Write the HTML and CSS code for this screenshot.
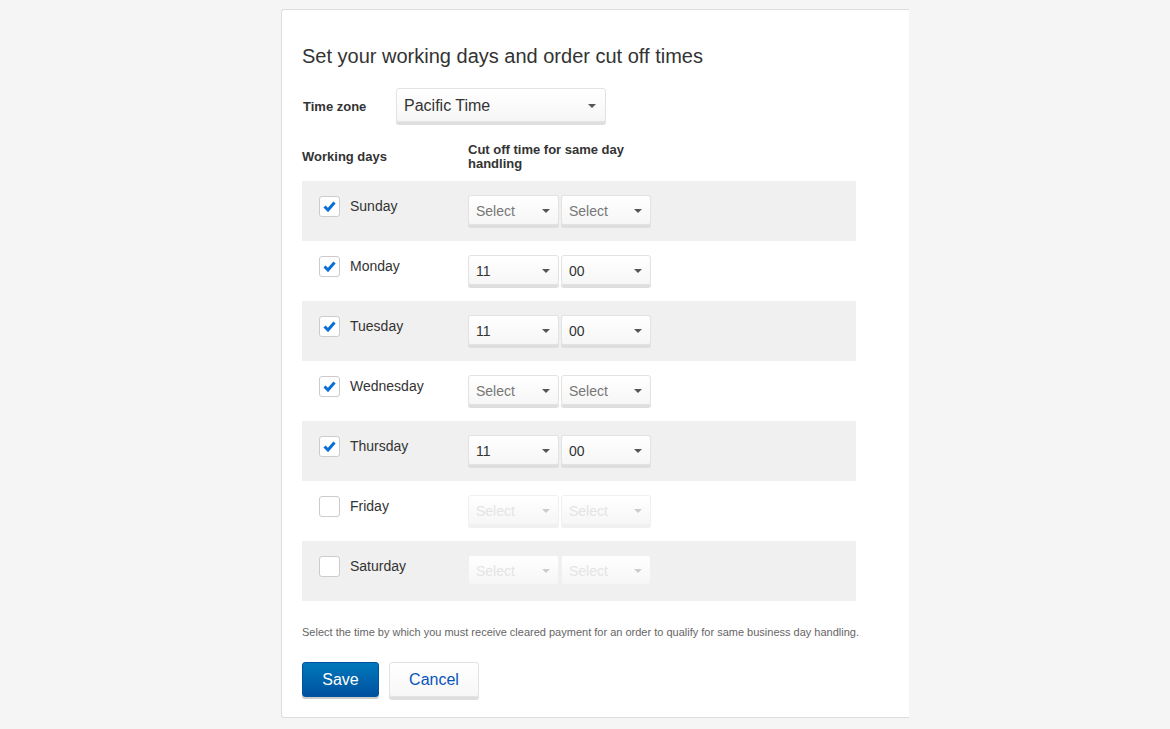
FILE: index.html
```html
<!DOCTYPE html>
<html lang="en">
  <head>
    <meta charset="UTF-8" />
    <title>Working days</title>
    <link rel="stylesheet" href="styles.css">
  </head>
  <body>
    <div class="card">
      <h1>Set your working days and order cut off times</h1>

      <!-- time zone -->
      <div class="tz-row">
        <label class="tz-label">Time zone</label>
        <div class="select select-tz">
          <span>Pacific Time</span>
          <svg class="caret" width="8" height="4" viewBox="0 0 8 4"><path d="M0 0h8L4 4z" /></svg>
        </div>
      </div>

      <div class="head-row">
        <div class="head-days">Working days</div>
        <div class="head-cut">Cut off time for same day handling</div>
      </div>

      <!-- days -->
      <div class="days">
        <div class="day-row shaded">
          <div class="day"><span class="check on"><svg width="13" height="11" viewBox="0 0 13 11"><path d="M1.5 5.5l3.5 3.5l6.5-7.5" /></svg></span>Sunday</div>
          <div class="times">
            <div class="select hour placeholder"><span>Select</span><svg class="caret" width="8" height="4" viewBox="0 0 8 4"><path d="M0 0h8L4 4z" /></svg></div>
            <div class="select minute placeholder"><span>Select</span><svg class="caret" width="8" height="4" viewBox="0 0 8 4"><path d="M0 0h8L4 4z" /></svg></div>
          </div>
        </div>
        <div class="day-row">
          <div class="day"><span class="check on"><svg width="13" height="11" viewBox="0 0 13 11"><path d="M1.5 5.5l3.5 3.5l6.5-7.5" /></svg></span>Monday</div>
          <div class="times">
            <div class="select hour"><span>11</span><svg class="caret" width="8" height="4" viewBox="0 0 8 4"><path d="M0 0h8L4 4z" /></svg></div>
            <div class="select minute"><span>00</span><svg class="caret" width="8" height="4" viewBox="0 0 8 4"><path d="M0 0h8L4 4z" /></svg></div>
          </div>
        </div>
        <div class="day-row shaded">
          <div class="day"><span class="check on"><svg width="13" height="11" viewBox="0 0 13 11"><path d="M1.5 5.5l3.5 3.5l6.5-7.5" /></svg></span>Tuesday</div>
          <div class="times">
            <div class="select hour"><span>11</span><svg class="caret" width="8" height="4" viewBox="0 0 8 4"><path d="M0 0h8L4 4z" /></svg></div>
            <div class="select minute"><span>00</span><svg class="caret" width="8" height="4" viewBox="0 0 8 4"><path d="M0 0h8L4 4z" /></svg></div>
          </div>
        </div>
        <div class="day-row">
          <div class="day"><span class="check on"><svg width="13" height="11" viewBox="0 0 13 11"><path d="M1.5 5.5l3.5 3.5l6.5-7.5" /></svg></span>Wednesday</div>
          <div class="times">
            <div class="select hour placeholder"><span>Select</span><svg class="caret" width="8" height="4" viewBox="0 0 8 4"><path d="M0 0h8L4 4z" /></svg></div>
            <div class="select minute placeholder"><span>Select</span><svg class="caret" width="8" height="4" viewBox="0 0 8 4"><path d="M0 0h8L4 4z" /></svg></div>
          </div>
        </div>
        <div class="day-row shaded">
          <div class="day"><span class="check on"><svg width="13" height="11" viewBox="0 0 13 11"><path d="M1.5 5.5l3.5 3.5l6.5-7.5" /></svg></span>Thursday</div>
          <div class="times">
            <div class="select hour"><span>11</span><svg class="caret" width="8" height="4" viewBox="0 0 8 4"><path d="M0 0h8L4 4z" /></svg></div>
            <div class="select minute"><span>00</span><svg class="caret" width="8" height="4" viewBox="0 0 8 4"><path d="M0 0h8L4 4z" /></svg></div>
          </div>
        </div>
        <div class="day-row">
          <div class="day"><span class="check"></span>Friday</div>
          <div class="times">
            <div class="select hour disabled"><span>Select</span><svg class="caret" width="8" height="4" viewBox="0 0 8 4"><path d="M0 0h8L4 4z" /></svg></div>
            <div class="select minute disabled"><span>Select</span><svg class="caret" width="8" height="4" viewBox="0 0 8 4"><path d="M0 0h8L4 4z" /></svg></div>
          </div>
        </div>
        <div class="day-row shaded">
          <div class="day"><span class="check"></span>Saturday</div>
          <div class="times">
            <div class="select hour disabled"><span>Select</span><svg class="caret" width="8" height="4" viewBox="0 0 8 4"><path d="M0 0h8L4 4z" /></svg></div>
            <div class="select minute disabled"><span>Select</span><svg class="caret" width="8" height="4" viewBox="0 0 8 4"><path d="M0 0h8L4 4z" /></svg></div>
          </div>
        </div>
      </div>

      <p class="note">Select the time by which you must receive cleared payment for an order to qualify for same business day handling.</p>

      <div class="actions">
        <button class="btn btn-save">Save</button>
        <button class="btn btn-cancel">Cancel</button>
      </div>
    </div>
  </body>
</html>
```

FILE: styles.css
```css
* {
  box-sizing: border-box;
  margin: 0;
  padding: 0;
}

body {
  font-family: "Liberation Sans", Arial, sans-serif;
  background-color: #f5f5f5;
  color: #333;
}

.card {
  width: 628px;
  margin: 9px 0 0 281px;
  padding: 34px 0 20px 20px;
  background-color: #fff;
  border: 1px solid #ddd;
  border-right: none;
  border-radius: 3px 0 0 3px;
}

h1 {
  font-size: 20px;
  line-height: 24px;
  font-weight: normal;
  color: #333;
  margin-bottom: 20px;
}

/* time zone */
.tz-row {
  display: flex;
  align-items: flex-start;
}

.tz-label {
  width: 94px;
  padding: 2px 0 0 1px;
  font-size: 13px;
  font-weight: bold;
  line-height: 34px;
}

.select {
  display: flex;
  align-items: center;
  justify-content: space-between;
  height: 30px;
  padding: 2px 8px 0 7px;
  font-size: 14px;
  color: #333;
  background: linear-gradient(#fff, #f6f6f6);
  border: 1px solid #e2e2e2;
  border-radius: 3px;
  box-shadow: 0 3px 0 #dedede;
}

.select .caret {
  fill: #555;
}

.select-tz {
  width: 210px;
  height: 34px;
  font-size: 16px;
  padding: 1px 9px 0 7px;
  margin-bottom: 20px;
}

/* headers */
.head-row {
  display: flex;
  font-size: 13px;
  font-weight: bold;
  line-height: 14px;
  margin-top: 1px;
  margin-bottom: 10px;
}

.head-days {
  width: 166px;
  padding-top: 7px;
}

.head-cut {
  width: 180px;
}

/* day rows */
.days {
  width: 554px;
}

.day-row {
  display: flex;
  align-items: flex-start;
  height: 60px;
  padding: 14px 0 0 17px;
}

.day-row.shaded {
  background-color: #f0f0f0;
}

.day {
  display: flex;
  align-items: center;
  gap: 10px;
  width: 149px;
  margin-top: 1px;
  font-size: 14px;
  line-height: 21px;
}

.check {
  display: flex;
  align-items: center;
  justify-content: center;
  width: 21px;
  height: 21px;
  background-color: #fff;
  border: 1px solid #ccc;
  border-radius: 3px;
}

.check svg path {
  fill: none;
  stroke: #0a6fd6;
  stroke-width: 3;
}

.times {
  display: flex;
  gap: 2px;
}

.hour {
  width: 91px;
}

.minute {
  width: 90px;
}

.placeholder {
  color: #777;
}

.disabled {
  color: #e4e4e4;
  border-color: #f0f0f0;
  box-shadow: 0 3px 0 #f0f0f0;
}

.disabled .caret {
  fill: #ccc;
}

/* footer */
.note {
  font-size: 11px;
  color: #666;
  margin-top: 25px;
  line-height: 13px;
}

.actions {
  display: flex;
  gap: 10px;
  margin-top: 23px;
}

.btn {
  height: 35px;
  font-family: "Liberation Sans", Arial, sans-serif;
  font-size: 16px;
  border-radius: 3px;
  cursor: pointer;
}

.btn-save {
  width: 77px;
  color: #fff;
  background: linear-gradient(#0079bc, #00519e);
  border: 1px solid #00519e;
  box-shadow: 0 2px 0 #ccc;
}

.btn-cancel {
  width: 90px;
  color: #0654ba;
  background: linear-gradient(#fff, #f7f7f7);
  border: 1px solid #e2e2e2;
  box-shadow: 0 3px 0 #dedede;
}
```
